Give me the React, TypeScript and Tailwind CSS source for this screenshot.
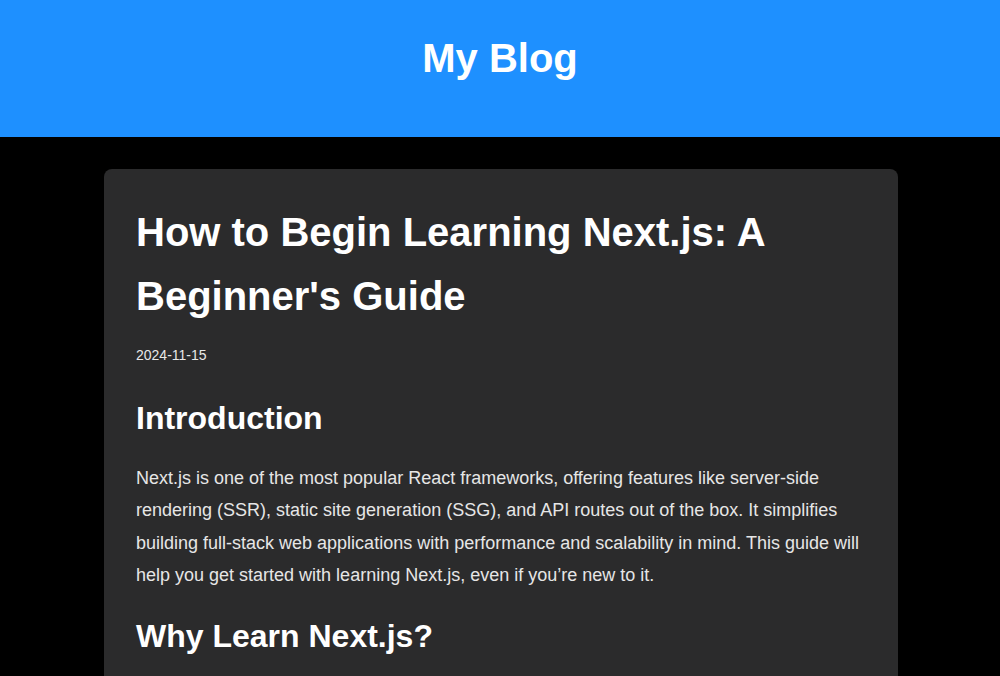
const paragraphs = [
  "Next.js is one of the most popular React frameworks, offering features like server-side rendering (SSR), static site generation (SSG), and API routes out of the box. It simplifies building full-stack web applications with performance and scalability in mind. This guide will help you get started with learning Next.js, even if you’re new to it.",
];

const App = () => {
  return (
    <div className="min-h-screen bg-black font-['Liberation_Sans',Arial,sans-serif] text-white">
      <header className="h-[137px] bg-[#1e90ff] pt-[35px] text-center">
        <h1 className="text-[40px] font-bold leading-[46px] text-white">My Blog</h1>
      </header>

      <main className="pt-8 pl-[104px] pr-[102px]">
        <article className="rounded-lg bg-[#2b2b2c] px-8 pt-[31px] pb-10">
          <h1 className="text-[40px] font-bold leading-[64px] text-white">
            How to Begin Learning Next.js: A Beginner's Guide
          </h1>
          <p className="mt-[15px] text-[14px] leading-[25px] text-[#e8e8e8]">2024-11-15</p>

          <h2 className="mt-[25px] text-[32px] font-bold leading-[51px] text-white">Introduction</h2>
          {paragraphs.map((text, i) => (
            <p key={i} className="mt-[18px] text-[18px] leading-[32.4px] text-[#e6e6e6]">
              {text}
            </p>
          ))}

          <h2 className="mt-[19px] text-[32px] font-bold leading-[51px] text-white">
            Why Learn Next.js?
          </h2>
        </article>
      </main>
    </div>
  );
};

export default App;
